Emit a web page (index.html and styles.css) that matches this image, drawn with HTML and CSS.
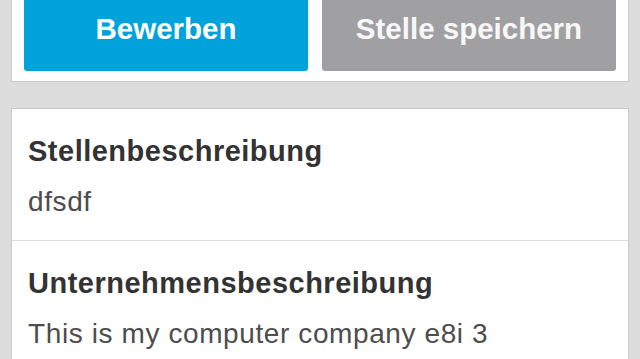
FILE: index.html
```html
<!DOCTYPE html>
<html lang="de">
<head>
<meta charset="utf-8">
<title>Stelle</title>
<link rel="stylesheet" href="styles.css">
</head>
<body>
<div class="page">
  <div class="card actions">
    <button class="btn btn-apply">Bewerben</button>
    <button class="btn btn-save">Stelle speichern</button>
  </div>
  <div class="card details">
    <section class="section">
      <h2 class="section-title">Stellenbeschreibung</h2>
      <p class="section-text">dfsdf</p>
    </section>
    <section class="section">
      <h2 class="section-title">Unternehmensbeschreibung</h2>
      <p class="section-text">This is my computer company e8i 3</p>
    </section>
  </div>
</div>
</body>
</html>
```
FILE: styles.css
```css
html, body {
  margin: 0;
  padding: 0;
  background: #dcdcdc;
  font-family: "Liberation Sans", Arial, sans-serif;
  overflow: hidden;
}

.page {
  display: flex;
  flex-direction: column;
  gap: 26px;
  padding: 0 11px;
  margin-top: -24px;
}

.card {
  background: #ffffff;
  border: 1px solid #c9c9c9;
}

.actions {
  display: grid;
  grid-template-columns: 284px 1fr;
  gap: 14px;
  padding: 10px 12px;
}

.btn {
  height: 84px;
  border: 0;
  border-radius: 3px;
  margin: 0;
  padding: 0;
  font-family: "Liberation Sans", Arial, sans-serif;
  font-weight: bold;
  font-size: 29.5px;
  line-height: 84px;
  color: #ffffff;
  text-align: center;
}

.btn-apply {
  background: #00a2dc;
}

.btn-save {
  background: #a0a0a2;
  color: #f7f7f7;
}

.section {
  padding: 25px 16px 21px;
}

.section + .section {
  border-top: 1px solid #dddddd;
}

.section-title {
  margin: 0;
  font-size: 29px;
  line-height: 34px;
  font-weight: bold;
  letter-spacing: 0.5px;
  color: #333333;
}

.section-text {
  margin: 17px 0 0;
  font-size: 28px;
  line-height: 34px;
  font-weight: normal;
  letter-spacing: 0.6px;
  color: #4d4d4d;
}
```
